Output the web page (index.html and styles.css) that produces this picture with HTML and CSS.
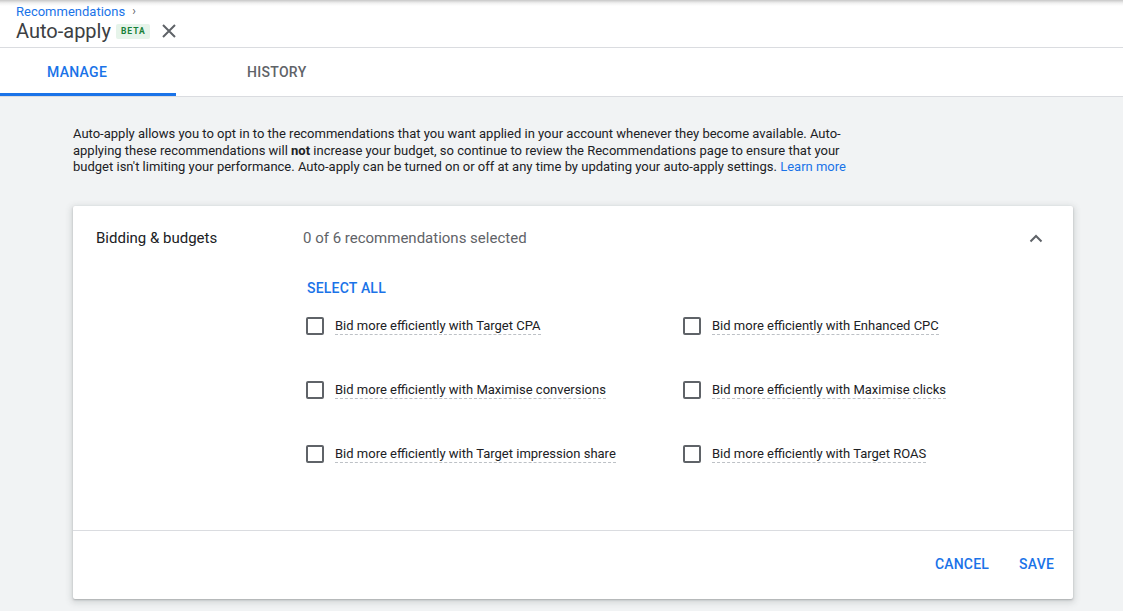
FILE: index.html
```html
<!DOCTYPE html>
<html>
<head>
<meta charset="utf-8">
<link rel="stylesheet" href="styles.css">
</head>
<body>
<header class="header">
  <div class="crumb"><a class="crumb-link">Recommendations</a><span class="crumb-sep">›</span></div>
  <div class="title-row">
    <h1 class="title">Auto-apply</h1>
    <span class="badge">BETA</span>
    <svg class="close" width="16" height="16" viewBox="0 0 16 16"><path d="M2 2 L14 14 M14 2 L2 14" stroke="#5f6368" stroke-width="2" fill="none"/></svg>
  </div>
</header>
<nav class="tabs">
  <div class="tab active">MANAGE</div>
  <div class="tab">HISTORY</div>
</nav>
<main class="main">
  <p class="intro">Auto-apply allows you to opt in to the recommendations that you want applied in your account whenever they become available. Auto-applying these recommendations will <b>not</b> increase your budget, so continue to review the Recommendations page to ensure that your budget isn't limiting your performance. Auto-apply can be turned on or off at any time by updating your auto-apply settings. <a class="link">Learn more</a></p>
  <section class="card">
    <div class="card-head">
      <div class="card-title">Bidding &amp; budgets</div>
      <div class="card-summary">0 of 6 recommendations selected</div>
      <svg class="chevron" width="14" height="9" viewBox="0 0 14 9"><path d="M1.5 7.5 L7 2 L12.5 7.5" stroke="#5f6368" stroke-width="2" fill="none"/></svg>
    </div>
    <div class="card-body">
      <div class="select-all">SELECT ALL</div>
      <div class="options">
        <label class="option"><span class="box"></span><span class="opt-text">Bid more efficiently with Target CPA</span></label>
        <label class="option"><span class="box"></span><span class="opt-text">Bid more efficiently with Enhanced CPC</span></label>
        <label class="option"><span class="box"></span><span class="opt-text">Bid more efficiently with Maximise conversions</span></label>
        <label class="option"><span class="box"></span><span class="opt-text">Bid more efficiently with Maximise clicks</span></label>
        <label class="option"><span class="box"></span><span class="opt-text">Bid more efficiently with Target impression share</span></label>
        <label class="option"><span class="box"></span><span class="opt-text">Bid more efficiently with Target ROAS</span></label>
      </div>
    </div>
    <div class="card-foot">
      <div class="btn">CANCEL</div>
      <div class="btn">SAVE</div>
    </div>
  </section>
</main>
</body>
</html>
```
FILE: styles.css
```css
* { box-sizing: border-box; }
html, body { margin: 0; padding: 0; }
body {
  font-family: Roboto, "Liberation Sans", Arial, sans-serif;
  background: #f1f3f4;
  color: #202124;
  height: 611px;
  overflow: hidden;
}
.header {
  background: #fff;
  height: 48px;
  border-bottom: 1px solid #dadce0;
  padding: 4px 16px 0;
  background-image: linear-gradient(to bottom, rgba(0,0,0,0.22), rgba(0,0,0,0.06) 3px, rgba(0,0,0,0) 6px);
}
.crumb {
  font-size: 13px;
  line-height: 15px;
  display: flex;
  align-items: center;
}
.crumb-link { color: #1a73e8; }
.crumb-sep { color: #5f6368; margin-left: 7px; font-size: 12px; }
.title-row {
  display: flex;
  align-items: center;
  height: 24px;
}
.title {
  margin: 0;
  font-size: 20px;
  font-weight: 400;
  color: #3c4043;
  line-height: 24px;
}
.badge {
  margin-left: 5px;
  background: #e6f4ea;
  color: #188038;
  font-size: 8.5px;
  font-weight: 700;
  letter-spacing: 1px;
  padding: 0 4px 0 5px;
  height: 15px;
  line-height: 15px;
  border-radius: 2px;
}
.close { margin-left: 11px; }
.tabs {
  display: flex;
  background: #fff;
  height: 49px;
  border-bottom: 1px solid #dadce0;
}
.tab {
  position: relative;
  width: 200px;
  height: 48px;
  line-height: 48px;
  padding-left: 47px;
  font-size: 14px;
  font-weight: 500;
  color: #5f6368;
  letter-spacing: 0.3px;
}
.tab.active { color: #1a73e8; }
.tab.active::after {
  content: "";
  position: absolute;
  left: 0;
  bottom: 0;
  width: 176px;
  height: 3px;
  background: #1a73e8;
}
.main {
  padding: 29px 50px 0 73px;
}
.intro {
  margin: 0;
  max-width: 782px;
  font-size: 13px;
  line-height: 16.5px;
  color: #202124;
}
.intro b { font-weight: 700; }
.link { color: #1a73e8; }
.card {
  margin-top: 30px;
  width: 1000px;
  height: 393px;
  background: #fff;
  border-radius: 2px;
  box-shadow: 0 1px 2px 0 rgba(60,64,67,0.3), 0 2px 6px 2px rgba(60,64,67,0.15);
  display: flex;
  flex-direction: column;
}
.card-head {
  height: 64px;
  display: flex;
  align-items: center;
  padding: 0 30px 0 23px;
  font-size: 15px;
}
.card-title { width: 207px; color: #202124; }
.card-summary { flex: 1; color: #5f6368; }
.chevron { margin-top: 1px; }
.card-body {
  flex: 1;
  padding: 8px 0 0 233px;
  border-bottom: 1px solid #dadce0;
}
.select-all {
  font-size: 14px;
  font-weight: 500;
  color: #1a73e8;
  line-height: 20px;
  padding-left: 1px;
  letter-spacing: 0.2px;
}
.options {
  display: grid;
  grid-template-columns: 377px 1fr;
  grid-auto-rows: 56px;
  row-gap: 8px;
}
.option {
  display: flex;
  align-items: center;
}
.box {
  width: 18px;
  height: 18px;
  border: 2px solid #5f6368;
  border-radius: 2px;
  margin-right: 11px;
  flex: none;
}
.opt-text {
  font-size: 13px;
  line-height: 17px;
  color: #202124;
  border-bottom: 1px dashed #bdc1c6;
}
.card-foot {
  height: 68px;
  padding-bottom: 1px;
  display: flex;
  justify-content: flex-end;
  align-items: center;
  padding-right: 11px;
  gap: 14px;
}
.btn {
  font-size: 14px;
  font-weight: 500;
  color: #1a73e8;
  padding: 8px;
  letter-spacing: 0.2px;
}
```
